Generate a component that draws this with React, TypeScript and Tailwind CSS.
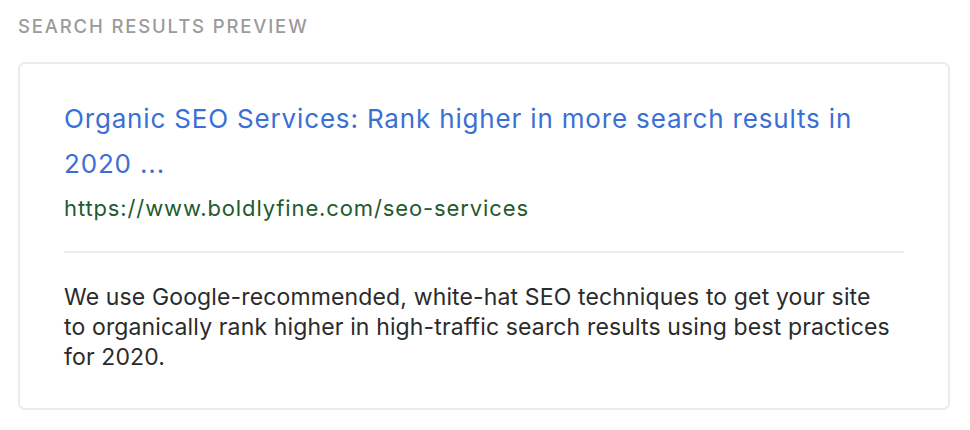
import React from "react";

export default function App() {
  return (
    <div className="min-h-screen bg-white px-[18px] pt-[14px]" style={{ fontFamily: "Inter, 'Noto Sans', sans-serif" }}>
      <div className="text-[18.5px] font-medium uppercase tracking-[0.1em] text-[#9b9b9b] leading-[24px]">
        Search Results Preview
      </div>
      <div className="mt-[24px] w-[932px] rounded-[7px] border-2 border-[#ececec] px-[44px] pt-[32px] pb-[36px]">
        <div className="text-[26px] leading-[45px] tracking-[0.032em] text-[#3a6fd6]">
          Organic SEO Services: Rank higher in more search results in 2020 ...
        </div>
        <div className="text-[22px] leading-[45px] tracking-[0.04em] text-[#235a2d]">
          https://www.boldlyfine.com/seo-services
        </div>
        <div className="mt-[20px] h-[2px] bg-[#ededed]" />
        <div className="mt-[29px] text-[23px] leading-[30px] tracking-[0.006em] text-[#2b2b2b]">
          We use Google-recommended, white-hat SEO techniques to get your site
          <br />
          to organically rank higher in high-traffic search results using best practices for 2020.
        </div>
      </div>
    </div>
  );
}
